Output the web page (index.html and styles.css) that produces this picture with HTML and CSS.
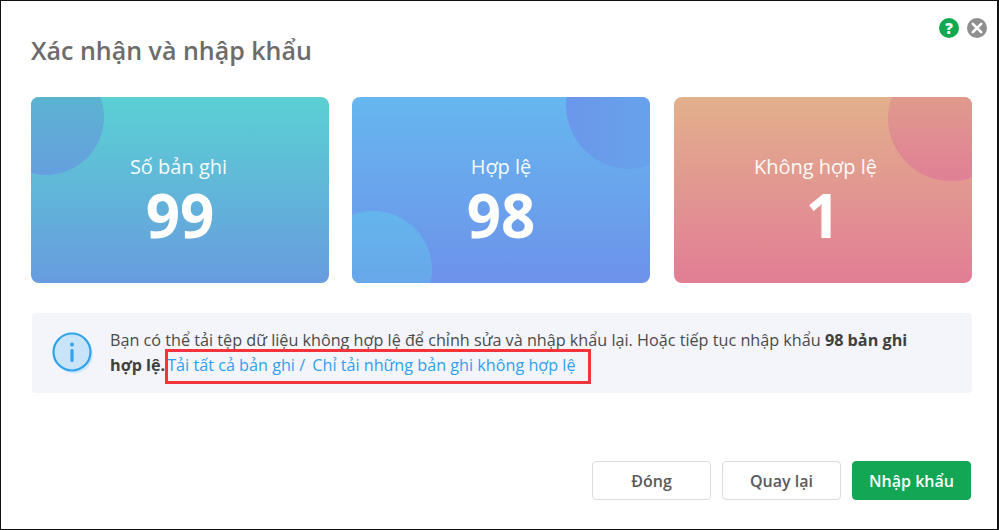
FILE: index.html
```html
<!DOCTYPE html>
<html lang="vi">
<head>
<meta charset="utf-8">
<title>Xác nhận và nhập khẩu</title>
<link rel="stylesheet" href="styles.css">
</head>
<body>
<div class="dialog">
  <div class="top-icons">
    <span class="icon-btn help">?</span>
    <span class="icon-btn close">
      <svg viewBox="0 0 20 20" width="20" height="20"><path d="M5.8 5.8L14.2 14.2M14.2 5.8L5.8 14.2" stroke="#fff" stroke-width="2.6" stroke-linecap="round"/></svg>
    </span>
  </div>
  <h1 class="title">Xác nhận và nhập khẩu</h1>
  <div class="cards">
    <div class="card card-total">
      <span class="blob blob-total"></span>
      <div class="label label-total">Số bản ghi</div>
      <div class="num">99</div>
    </div>
    <div class="card card-valid">
      <span class="blob blob-valid-a"></span>
      <span class="blob blob-valid-b"></span>
      <div class="label">Hợp lệ</div>
      <div class="num">98</div>
    </div>
    <div class="card card-invalid">
      <span class="blob blob-invalid"></span>
      <div class="label label-invalid">Không hợp lệ</div>
      <div class="num">1</div>
    </div>
  </div>
  <div class="notice">
    <svg class="info" viewBox="0 0 42 42" width="42" height="42">
      <circle cx="22" cy="22.5" r="19" fill="#d3e9fb"/>
      <circle cx="20" cy="20" r="18.5" fill="#c9e3f9" stroke="#2ea3f0" stroke-width="2.2"/>
      <circle cx="20" cy="12.6" r="2" fill="#2ea3f0"/>
      <rect x="18.4" y="17" width="3.2" height="13" rx="1.4" fill="#2ea3f0"/>
    </svg>
    <p class="msg">Bạn có thể tải tệp dữ liệu không hợp lệ để chỉnh sửa và nhập khẩu lại. Hoặc tiếp tục nhập khẩu <b>98 bản ghi hợp lệ.</b><a class="lnk lnk-first">Tải tất cả bản ghi</a><span class="sep"> / </span><a class="lnk">Chỉ tải những bản ghi không hợp lệ</a></p>
    <span class="marker"></span>
  </div>
  <div class="actions">
    <button class="btn">Đóng</button>
    <button class="btn">Quay lại</button>
    <button class="btn primary">Nhập khẩu</button>
  </div>
</div>
</body>
</html>
```
FILE: styles.css
```css
* { box-sizing: border-box; }
html, body { margin: 0; padding: 0; }
body { width: 999px; height: 530px; overflow: hidden; background: #fff; font-family: "Open Sans", sans-serif; }
.dialog { position: relative; width: 999px; height: 530px; border: 1px solid #111; border-width: 1px 2px 1px 1px; background: #fff; padding: 0 25px 0 30px; display: flex; flex-direction: column; }
.top-icons { position: absolute; top: 17px; right: 10px; display: flex; gap: 8px; }
.icon-btn { width: 20px; height: 20px; border-radius: 50%; display: flex; align-items: center; justify-content: center; color: #fff; font-size: 15px; font-weight: 800; line-height: 1; }
.help { background: #12a850; }
.close { background: #8f8f8f; }
.title { margin: 32px 0 0; font-size: 25px; line-height: 34px; font-weight: 600; color: #6c6c6c; }
.cards { display: flex; gap: 23px; margin-top: 30px; }
.card { position: relative; overflow: hidden; width: 298px; height: 186px; border-radius: 8px; color: #fff; text-align: center; padding-top: 55px; }
.card-total { background: linear-gradient(180deg, #5bd0d3, #679cdf); }
.card-valid { background: linear-gradient(180deg, #66b7ef, #6d92ea); }
.card-invalid { margin-left: 1px; background: linear-gradient(180deg, #e2b08c, #e27d95); }
.blob { position: absolute; border-radius: 50%; }
.blob-total { left: -43px; top: -38px; width: 116px; height: 116px; background: linear-gradient(180deg, #57bdca, #669fdf); }
.blob-valid-a { left: 214px; top: -56px; width: 128px; height: 128px; background: linear-gradient(90deg, #6b97ea, #66a8ec); }
.blob-valid-b { left: -38px; top: 114px; width: 118px; height: 118px; background: linear-gradient(180deg, #65b5ec, #689fe8); }
.blob-invalid { left: 214px; top: -42px; width: 126px; height: 126px; background: linear-gradient(180deg, #e0a888, #e07f96); }
.label, .num { position: relative; }
.label { font-size: 20px; line-height: 30px; opacity: .95; }
.label-total { padding-right: 3px; }
.label-invalid { padding-right: 15px; }
.num { font-size: 60px; line-height: 66px; font-weight: 700; margin-top: 0; }
.notice { position: relative; display: flex; align-items: center; margin: 30px 0 0 1px; width: 940px; height: 80px; background: #f3f5fa; border-radius: 4px; padding: 0 40px 0 20px; }
.info { flex: none; margin: 0 16px 0 0; }
.msg { margin: 0; font-size: 16.2px; line-height: 25px; color: #4a4a4a; }
.msg b { font-weight: 700; color: #3f3f3f; }
.lnk { color: #2f9ff0; }
.lnk-first { margin-left: 2px; }
.sep { color: #2f9ff0; margin-right: 3px; }
.marker { position: absolute; left: 133px; top: 36px; width: 426px; height: 35px; border: 3px solid #f4343c; pointer-events: none; }
.actions { display: flex; justify-content: flex-end; gap: 11px; margin-top: 68px; padding-right: 1px; }
.btn { width: 119px; height: 39px; padding: 0; border: 1.5px solid #dcdcdc; border-radius: 4px; background: #fff; color: #5a5a5a; font: 600 16px "Open Sans", sans-serif; }
.primary { background: #12a655; border-color: #12a655; color: #fff; }
```
